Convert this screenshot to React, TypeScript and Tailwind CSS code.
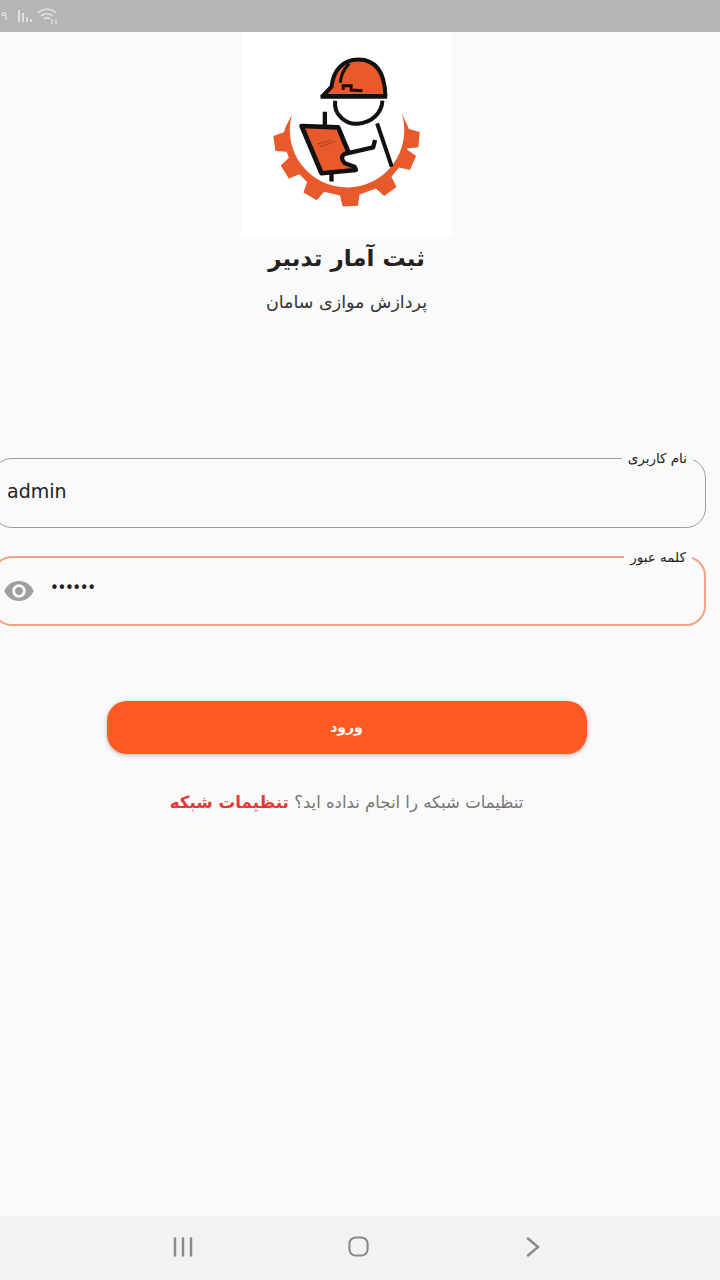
const arabic = "font-['DejaVu_Sans',sans-serif]";

// gear rim opened at the top, teeth given by angle from the centre
function gearPath() {
  const cx = 350;
  const cy = 310;
  const pt = (r: number, deg: number) => {
    const a = (deg * Math.PI) / 180;
    return `${(cx + r * Math.cos(a)).toFixed(1)} ${(cy + r * Math.sin(a)).toFixed(1)}`;
  };
  const teeth = [172, 148, 120, 87, 53, 24, 5];
  let d = "M186 254 L" + pt(184, 186);
  for (const t of teeth) {
    d += ` L${pt(188, t + 9)} L${pt(220, t + 6)} L${pt(220, t - 6)} L${pt(188, t - 9)}`;
  }
  d += ` L${pt(184, -8)} L516 250 A172 172 0 1 1 186 254 Z`;
  return d;
}

function Logo() {
  return (
    <svg viewBox="33 6 634 615" className="w-[211px] h-[205px] bg-white block">
      <path d={gearPath()} fill="#e85a2c" />
      <path d="M442 280 L486 410" stroke="#111" strokeWidth="12" fill="none" />
      <path d="M316 212 C310 255 350 285 385 281 C425 278 456 250 458 212" stroke="#111" strokeWidth="12" fill="none" />
      <path d="M285 245 L285 285 M305 430 L305 455" stroke="#111" strokeWidth="13" fill="none" />
      <path d="M215 288 L325 292 L378 420 L275 430 Z" fill="#e85a2c" stroke="#111" strokeWidth="14" strokeLinejoin="round" />
      <path d="M262 342 C280 338 290 335 305 330 M270 350 C285 345 300 340 316 334" stroke="#7a3018" strokeWidth="2" fill="none" />
      <path d="M436 330 L430 352 L345 372 Q328 382 345 400 L378 412" stroke="#111" strokeWidth="13" fill="white" strokeLinejoin="round" />
      <path d="M278 198 L305 170 C310 120 340 88 385 88 C440 88 465 130 467 198 Z" fill="#e85a2c" stroke="#111" strokeWidth="12" strokeLinejoin="round" />
      <path d="M272 200 H472" stroke="#111" strokeWidth="12" fill="none" />
      <path d="M358 100 C340 120 332 140 332 158" stroke="#111" strokeWidth="9" fill="none" />
      <path d="M340 180 L340 167 L364 167 L364 180 L398 182" stroke="#111" strokeWidth="9" fill="none" />
    </svg>
  );
}

function Field({ label, focused, children }: { label: string; focused?: boolean; children: React.ReactNode }) {
  return (
    <div
      className={`relative -ml-2 w-[714px] h-[70px] rounded-[20px] flex items-center ${
        focused ? "border-2 border-[#f3a283]" : "border-[1.500px] border-[#9e9e9e]"
      }`}
    >
      <span
        dir="rtl"
        className={`absolute right-3 -top-[10px] bg-[#fafafa] px-1.5 text-[13.500px] leading-[18px] text-[#1c1c1c] ${arabic}`}
      >
        {label}
      </span>
      {children}
    </div>
  );
}

export default function App() {
  return (
    <div className={`w-[720px] h-[1280px] flex flex-col bg-[#fafafa] overflow-hidden ${arabic}`}>
      {/* Status bar */}
      <div className="h-8 shrink-0 bg-[#b5b5b5] flex items-center gap-[10px] text-[#e9e9e9]">
        <span className="text-[12px] leading-none pl-px">۹</span>
        <svg width="16" height="14" viewBox="0 0 16 14" fill="#e0e0e0">
          <rect x="1" y="1" width="2" height="12" />
          <rect x="5" y="4" width="2" height="9" />
          <rect x="9" y="8" width="2" height="5" />
          <rect x="13" y="10" width="2" height="3" />
        </svg>
        <svg width="22" height="18" viewBox="0 0 22 18" fill="none" stroke="#e0e0e0" strokeWidth="1.600" className="-ml-[6px]">
          <path d="M1 6 C6 1 14 1 19 6 M4 9 C8 6 12 6 16 9 M7 12 C9 10.500 11 10.500 13 12" />
          <path d="M15 12 V17 M19 17 V12" strokeWidth="1.400" />
        </svg>
      </div>

      {/* Main */}
      <div className="flex-1 flex flex-col">
        <div className="w-[693px] flex flex-col items-center">
          <Logo />
          <h1 dir="rtl" className="mt-[4px] text-[23px] leading-[34px] font-bold text-[#212121]">
            ثبت آمار تدبیر
          </h1>
          <p dir="rtl" className="mt-[15px] text-[17.500px] leading-[24px] text-[#333333]">
            پردازش موازی سامان
          </p>
        </div>

        <div className="mt-[144px] flex flex-col gap-[28px]">
          <Field label="نام کاربری">
            <span className="pl-[14px] pb-1 text-[19px] leading-7 text-[#212121]">admin</span>
          </Field>
          <Field label="کلمه عبور" focused>
            <div className="flex items-center pl-[9px] gap-[15px]">
              <svg width="32" height="32" viewBox="0 0 24 24" fill="#9e9e9e">
                <path d="M12 4.500C7 4.500 2.730 7.610 1 12c1.730 4.390 6 7.500 11 7.500s9.270-3.110 11-7.500c-1.730-4.390-6-7.500-11-7.500zM12 17c-2.760 0-5-2.240-5-5s2.240-5 5-5 5 2.240 5 5-2.240 5-5 5zm0-8c-1.660 0-3 1.340-3 3s1.340 3 3 3 3-1.340 3-3-1.340-3-3-3z" />
              </svg>
              <span className="text-[15px] leading-none tracking-[-1.400px] text-[#212121] -mt-1.5">••••••</span>
            </div>
          </Field>
        </div>

        <div className="mt-[75px] w-[693px] flex flex-col items-center">
          <button className="w-[480px] h-[53px] rounded-[20px] bg-[#ff5a24] text-white text-[14px] font-bold shadow-[0_1px_4px_rgba(0,0,0,0.3)]">
            ورود
          </button>
          <p dir="rtl" className="mt-[34px] text-[16.500px] leading-[28px] text-[#757575]">
            تنظیمات شبکه را انجام نداده اید؟{" "}
            <span className="font-bold text-[16.700px] text-[#e53935]">تنظیمات شبکه</span>
          </p>
        </div>
      </div>

      {/* Nav bar */}
      <div className="h-16 shrink-0 bg-[#f2f2f2] flex items-center justify-center text-[#8a8a8a] pr-[7px]">
        <div className="w-[367px] flex items-center justify-between pb-[3px]">
          <svg width="20" height="20" viewBox="0 0 20 20" stroke="currentColor" strokeWidth="2.500" strokeLinecap="round">
            <path d="M2 1.500V18.500M10 1.500V18.500M18 1.500V18.500" />
          </svg>
          <svg width="21" height="21" viewBox="0 0 22 22" fill="none" stroke="currentColor" strokeWidth="2.200" className="-ml-[3px]">
            <rect x="1.500" y="1.500" width="19" height="19" rx="6.500" />
          </svg>
          <svg width="14" height="20" viewBox="0 0 14 20" fill="none" stroke="currentColor" strokeWidth="2.400" strokeLinecap="round">
            <path d="M2 1.500L12 10L2 18.500" />
          </svg>
        </div>
      </div>
    </div>
  );
}
